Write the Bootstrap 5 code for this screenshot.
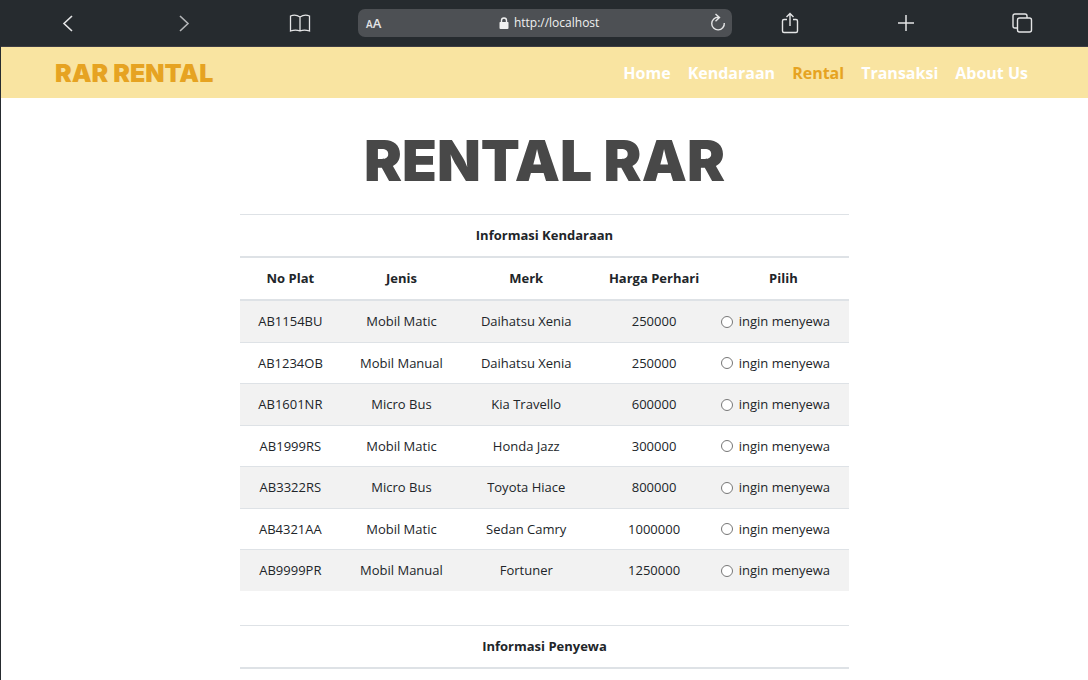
<!DOCTYPE html>
<html lang="id">
<head>
<meta charset="utf-8">
<meta name="viewport" content="width=device-width, initial-scale=1">
<title>RAR Rental</title>
<link href="https://cdn.jsdelivr.net/npm/bootstrap@5.3.0/dist/css/bootstrap.min.css" rel="stylesheet">
<style>
  body { font-family: "Open Sans", "Noto Sans", sans-serif; font-size: 13px; color: #212529; border-left: 1px solid #262b2f; height: 100vh; overflow: hidden; }
  .browser-bar { display: grid; grid-template-columns: repeat(3, 116fr) 374fr repeat(3, 116fr); height: 47px; padding: 0 8px 0 9px; background: #262b2f; border-bottom: 1px solid #3e3d43; }
  .tool { height: 30px; padding: 0; border: 0; background: none; color: #e4e5e6; line-height: 1; }
  .tool svg, .address svg { display: block; margin: auto; fill: none; stroke: currentColor; }
  .tool-dim { color: #b4b6b8; }
  .address { height: 28px; padding: 0 4px 0 8px; background: #4d5054; border-radius: 7px; color: #f0f0f0; }
  .address .tool { height: 28px; font-weight: 600; }
  .size-small { font-size: 10px; }
  .size-large { font-size: 13px; }
  .url-text { font-size: 12px; line-height: 20px; }
  .site-nav { height: 51px; padding: 0 60px 0 54px; background: #f9e4a1; }
  .brand-link { font: 900 25px/30px Inter, sans-serif; color: #e6a322; text-decoration: none; }
  .menu-row { gap: 17px; }
  .menu-link { font-size: 16px; font-weight: 700; line-height: 24px; color: #fff; text-decoration: none; }
  .menu-link.active { color: #e6a322; }
  .page-title { margin: 33px 0 23px; font: 900 57px/60px Inter, sans-serif; color: #484848; text-align: center; }
  .content { width: 56%; margin: 0 auto; }
  .rental-table { table-layout: fixed; margin: 0 0 34px; color: #212529; text-align: center; }
  .rental-table > :not(caption) > * > * { padding: 10px 0; line-height: 21px; border: 0; border-top: 1px solid #dee2e6; }
  .rental-table > thead > tr > th { font-weight: 700; border-bottom: 2px solid #dee2e6; }
  .rental-table > tbody > tr:nth-child(even) > td { line-height: 20px; }
  .rental-table > tbody > tr:nth-child(odd) > td { background: #f2f2f2; box-shadow: none; }
  .rental-table label { padding-right: 16px; }
  .rental-table input { width: 12px; height: 12px; margin: 0 6px 0 0; }
</style>
</head>
<body>
<header class="browser-bar align-items-center">
  <button class="tool" aria-label="Back"><svg width="20" height="20" stroke-width="1.6"><path d="M14 3 6 10.500 14 18"/></svg></button>
  <button class="tool tool-dim" aria-label="Forward"><svg width="20" height="20" stroke-width="1.6"><path d="M6 3l8 7.500L6 18"/></svg></button>
  <button class="tool" aria-label="Bookmarks"><svg width="24" height="20" stroke-width="1.300"><path d="M12 4C9 2 5 2 2.500 3v15c3-1 7-1 9.500 0 2.500-1 6.500-1 9.500 0V3C19 2 15 2 12 4v14"/></svg></button>
  <div class="address d-flex align-items-center">
    <button class="tool" aria-label="Text size"><span class="size-small">A</span><span class="size-large">A</span></button>
    <div class="flex-grow-1 d-flex align-items-center justify-content-center gap-1 ps-2">
      <div><svg width="12" height="14"><path fill="currentColor" stroke="none" d="M2 6h8q.5 0 .5 1v5q0 1-1 1h-7q-1 0-1-1V7q0-1 .5-1"/><path stroke-width="1.400" d="M3.500 6V4.500a2.500 2.500 0 0 1 5 0V6"/></svg></div>
      <span class="url-text">http://localhost</span>
    </div>
    <button class="tool" aria-label="Reload"><svg width="20" height="20" stroke-width="1.400"><path d="M10.500 4.300A6.300 6.300 0 1 0 16.300 10M7.500 1l4 3.500-4 3.800"/></svg></button>
  </div>
  <button class="tool" aria-label="Share"><svg width="20" height="22" stroke-width="1.400"><path d="M7 7.500H4Q2.500 7.500 2.500 9v10q0 1.500 1.500 1.500h12q1.500 0 1.500-1.500V9q0-1.500-1.500-1.500h-3M10 14V1.500M6.500 5 10 1.500 13.500 5"/></svg></button>
  <button class="tool" aria-label="New tab"><svg width="18" height="18" stroke-width="1.500"><path d="M9 1v16M1 9h16"/></svg></button>
  <button class="tool" aria-label="Tabs"><svg width="22" height="20" stroke-width="1.400"><rect x="6.500" y="5" width="14" height="14" rx="2"/><path d="M6.500 15H4q-2 0-2-2V3q0-2 2-2h10q2 0 2 2v2"/></svg></button>
</header>

<nav class="site-nav d-flex align-items-center justify-content-between">
  <a class="brand-link" href="#">RAR RENTAL</a>
  <div class="menu-row d-flex">
    <a class="menu-link" href="#">Home</a>
    <a class="menu-link" href="#">Kendaraan</a>
    <a class="menu-link active" href="#" aria-current="page">Rental</a>
    <a class="menu-link" href="#">Transaksi</a>
    <a class="menu-link" href="#">About Us</a>
  </div>
</nav>

<main>
  <h1 class="page-title">RENTAL RAR</h1>
  <form class="content">
    <table class="table rental-table">
      <colgroup><col style="width:16.500%"><col style="width:20%"><col style="width:21%"><col style="width:21%"><col></colgroup>
      <thead>
        <tr><th colspan="5">Informasi Kendaraan</th></tr>
        <tr><th>No Plat</th><th>Jenis</th><th>Merk</th><th>Harga Perhari</th><th>Pilih</th></tr>
      </thead>
      <tbody>
        <tr><td>AB1154BU</td><td>Mobil Matic</td><td>Daihatsu Xenia</td><td>250000</td><td><label class="d-flex align-items-center justify-content-center"><input type="radio" name="plat">ingin menyewa</label></td></tr>
        <tr><td>AB1234OB</td><td>Mobil Manual</td><td>Daihatsu Xenia</td><td>250000</td><td><label class="d-flex align-items-center justify-content-center"><input type="radio" name="plat">ingin menyewa</label></td></tr>
        <tr><td>AB1601NR</td><td>Micro Bus</td><td>Kia Travello</td><td>600000</td><td><label class="d-flex align-items-center justify-content-center"><input type="radio" name="plat">ingin menyewa</label></td></tr>
        <tr><td>AB1999RS</td><td>Mobil Matic</td><td>Honda Jazz</td><td>300000</td><td><label class="d-flex align-items-center justify-content-center"><input type="radio" name="plat">ingin menyewa</label></td></tr>
        <tr><td>AB3322RS</td><td>Micro Bus</td><td>Toyota Hiace</td><td>800000</td><td><label class="d-flex align-items-center justify-content-center"><input type="radio" name="plat">ingin menyewa</label></td></tr>
        <tr><td>AB4321AA</td><td>Mobil Matic</td><td>Sedan Camry</td><td>1000000</td><td><label class="d-flex align-items-center justify-content-center"><input type="radio" name="plat">ingin menyewa</label></td></tr>
        <tr><td>AB9999PR</td><td>Mobil Manual</td><td>Fortuner</td><td>1250000</td><td><label class="d-flex align-items-center justify-content-center"><input type="radio" name="plat">ingin menyewa</label></td></tr>
      </tbody>
    </table>
    <table class="table rental-table">
      <thead><tr><th>Informasi Penyewa</th></tr></thead>
    </table>
  </form>
</main>
<script src="https://cdn.jsdelivr.net/npm/bootstrap@5.3.0/dist/js/bootstrap.bundle.min.js"></script>
</body>
</html>
